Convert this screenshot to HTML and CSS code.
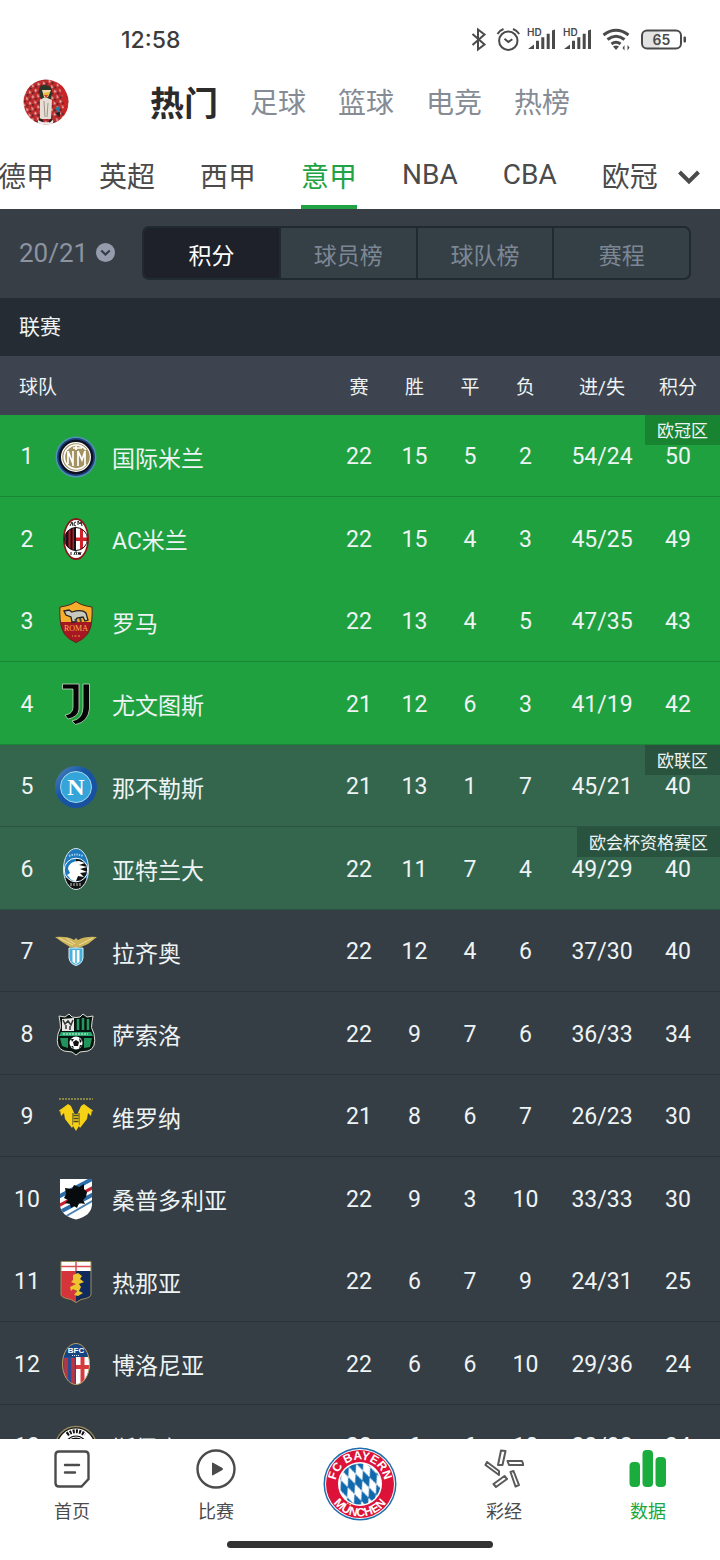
FILE: index.html
```html
<!DOCTYPE html>
<html lang="zh-CN">
<head>
<meta charset="utf-8">
<meta name="viewport" content="width=device-width, initial-scale=1">
<title>意甲积分榜</title>
<link rel="stylesheet" href="styles.css">
</head>
<body>
<div class="app">
  <header class="top">
    <div class="status">
      <time class="clock">12:58</time>
      <svg class="status-icons" viewBox="0 0 220 28" aria-hidden="true">
        <path class="st-line" d="M4.500 8L16.500 18.500L10 23.500V3.500L16.500 8.500L4.500 19"/>
        <circle class="st-line" cx="40.300" cy="14.800" r="9.200"/>
        <path class="st-line" d="M29.500 8Q31.500 4.500 35.500 3M45 3Q49 4.500 51.200 8M36.500 12.800L40.300 16L44.300 13.200"/>
        <g id="signal">
          <path class="st-fill" d="M60 23L66 18.500V23ZM68 14.700H71V23H68ZM73.300 11.300H76.300V23H73.300ZM78.700 7.700H81.700V23H78.700ZM84 4.500L87 3.500V23H84Z"/>
          <text class="st-hd" x="59" y="10">HD</text>
        </g>
        <use href="#signal" x="36"/>
        <path class="st-wifi" d="M135.500 9Q148 -.5 160.500 9M139.500 13.500Q148 7 156.500 13.500M143.500 18Q148 14.500 152.500 18"/>
        <path class="st-fill" d="M145 20.500Q148 18.500 151 20.500L148 24ZM156.500 19V24.500L154.500 22M159.500 24.500V19L161.500 21.500"/>
        <rect x="175" y="5" width="17" height="17" rx="3" fill="#e3e3e3"/>
        <rect class="st-line" x="174" y="4.500" width="39" height="18" rx="5"/>
        <rect class="st-fill" x="215.500" y="10.500" width="2.500" height="6" rx="1"/>
        <text class="st-bat" x="193.500" y="18.500" text-anchor="middle">65</text>
      </svg>
    </div>
    <div class="channels">
      <a class="avatar" href="#" aria-label="我的">
        <svg viewBox="0 0 46 46" aria-hidden="true">
          <defs>
            <clipPath id="avc"><circle cx="23" cy="23" r="22.500"/></clipPath>
            <pattern id="speck" width="9" height="7" patternUnits="userSpaceOnUse" patternTransform="rotate(24)">
              <rect width="9" height="7" fill="#bd2b2c"/>
              <path d="M1 1l3 1-1 2zM6 4l3 1-2 2z" fill="#efc9c0"/><path d="M5 0l2 2-2 1zM0 5l3 0-1 2zM7 1l2 2z" fill="#492226"/>
            </pattern>
          </defs>
          <g clip-path="url(#avc)">
            <rect width="46" height="46" fill="url(#speck)"/>
            <path d="M36 0Q50 20 42 46H39Q45 22 34 3Z" fill="#cb2427"/>
            <path d="M16 13Q15 6 22 6Q29 6 29 13L28 20H18Z" fill="#2b3528"/>
            <path d="M17 21L22 18L29 21L28 40H17Z" fill="#e6ded4"/>
            <path d="M19 11H28L25 18H21Z" fill="#f1d8ac"/><path d="M20 14L27 13L24 19Z" fill="#e8bd34"/><path d="M21 16l4 0-2 3Z" fill="#d94128"/>
            <path d="M21 22L22 38M25 24L24 38" stroke="#9b9588"/><path d="M15 41Q23 46 30 41V46H15Z" fill="#eee"/>
            <path d="M16 40L20 42M26 43L29 40" stroke="#222" stroke-width="2"/><path d="M32 29L37 27L36 35Z" fill="#257d9d"/><path d="M32 34L37 33L37 38Z" fill="#222"/>
          </g>
        </svg>
      </a>
      <nav class="channel-nav" aria-label="频道">
        <a class="current" href="#">热门</a><a href="#">足球</a><a href="#">篮球</a><a href="#">电竞</a><a href="#">热榜</a>
      </nav>
    </div>
    <div class="leagues">
      <nav class="league-nav" aria-label="赛事">
        <a href="#">德甲</a><a href="#">英超</a><a href="#">西甲</a><a class="current" href="#">意甲</a><a class="latin" href="#">NBA</a><a class="latin" href="#">CBA</a><a href="#">欧冠</a>
      </nav>
      <button class="more" aria-label="展开">
        <svg viewBox="0 0 24 16" aria-hidden="true"><path d="M2.500 3L12 12.500L21.500 3"/></svg>
      </button>
    </div>
  </header>

  <main class="content">
    <div class="toolbar">
      <label class="season">
        <select aria-label="赛季"><option>20/21</option></select>
        <svg viewBox="0 0 18 18" aria-hidden="true"><circle cx="9" cy="9" r="9" fill="#949cae"/><path d="M5 7.200L9 11L13 7.200" fill="none" stroke="#343c44" stroke-width="2"/></svg>
      </label>
      <div class="segments">
        <button class="selected">积分</button><button>球员榜</button><button>球队榜</button><button>赛程</button>
      </div>
    </div>
    <h2 class="section">联赛</h2>
    <table class="standings">
      <colgroup><col class="c-rank"><col class="c-crest"><col><col class="c-a"><col class="c-b"><col class="c-a"><col class="c-b"><col class="c-goals"><col class="c-pts"><col class="c-end"></colgroup>
      <thead>
        <tr><th class="team-head" colspan="3">球队</th><th>赛</th><th>胜</th><th>平</th><th>负</th><th>进/失</th><th>积分</th><th></th></tr>
      </thead>
      <tbody>
        <tr class="ucl"><td>1</td><td><svg class="crest" viewBox="0 0 44 44" aria-hidden="true">
          <circle cx="22" cy="22" r="20.500" fill="#4f93b6"/><circle cx="22" cy="22" r="19" fill="#1d3f78"/><circle cx="22" cy="22" r="17.300" fill="#0c1020"/><circle cx="22" cy="22" r="15" fill="#fff"/><circle cx="22" cy="22" r="13.800" fill="#a39261"/>
          <path d="M32 15A12 12 0 1 0 32 29M14 16V29M14 16L19 29M19 16V31M24 31V16L28 25L31 16V30M19 13H28M22 11V15" fill="none" stroke="#fff" stroke-width="1.700"/></svg></td>
          <th scope="row">国际米兰</th><td>22</td><td>15</td><td>5</td><td>2</td><td>54/24</td><td>50</td><td><span class="zone">欧冠区</span></td></tr>
        <tr class="ucl"><td>2</td><td><svg class="crest" viewBox="0 0 44 44" aria-hidden="true">
          <defs><clipPath id="milan"><circle cx="22" cy="22" r="11.500"/></clipPath></defs>
          <ellipse cx="22" cy="22" rx="13" ry="21" fill="#8b171c"/><ellipse cx="22" cy="22" rx="11.300" ry="19" fill="#fff"/>
          <g clip-path="url(#milan)"><path d="M10 10H22V34H10Z" fill="#c31825"/><path d="M12 10H14.500V34H12ZM16.500 10H18.500V34H16.500ZM20 10H22V34H20Z" fill="#171117"/><path d="M22 10H34V34H22Z" fill="#fff"/><path d="M26 10H29V34H26ZM22 20.500H34V24H22Z" fill="#d12229"/></g>
          <circle cx="22" cy="22" r="11.500" fill="none" stroke="#171117"/>
          <path d="M16 9l2-4 1 4M22 5q-2 0-2 2t2 2M24 8V4l2 3 1-2 1 4M17 35v3M20 38l1-3 2 0-1 3M24 38l1-3 1 3 1-3" fill="none" stroke="#181818"/></svg></td>
          <th scope="row">AC米兰</th><td>22</td><td>15</td><td>4</td><td>3</td><td>45/25</td><td>49</td><td></td></tr>
        <tr class="ucl"><td>3</td><td><svg class="crest" viewBox="0 0 44 44" aria-hidden="true">
          <path d="M22 1.500Q27 5.500 38 7Q38.500 12 37.800 20Q37 37 22 42.500Q7 37 6.200 20Q5.500 12 6 7Q17 5.500 22 1.500Z" fill="#f6ae2c"/>
          <path d="M6.200 22H37.800Q36 37 22 42.500Q8 37 6.200 22Z" fill="#a61723"/><path d="M22 1.500Q27 5.500 38 7Q38.500 12 37.800 20Q37 37 22 42.500Q7 37 6.200 20Q5.500 12 6 7Q17 5.500 22 1.500Z" fill="none" stroke="#54251b"/>
          <path d="M10 11L15 10L18 12Q28 9 32 13L34 20L31 21L29 17L23 18L21 22H18L17 17L12 15Z" fill="#c9c8bc" stroke="#222" stroke-width="1.300"/><path d="M21 19L23 22M26 18L27 22" stroke="#444" stroke-width="2"/>
          <text x="22" y="31" text-anchor="middle" class="crest-roma">ROMA</text><path d="M18 36h1M20.500 36h2M24 36h2" stroke="#eca33e"/></svg></td>
          <th scope="row">罗马</th><td>22</td><td>13</td><td>4</td><td>5</td><td>47/35</td><td>43</td><td></td></tr>
        <tr class="ucl"><td>4</td><td><svg class="crest" viewBox="0 0 44 44" aria-hidden="true">
          <path d="M8.500 2H25V27Q24.500 35 14 37L11 33Q19 32 19 25V7H8.500ZM29 2H35.500V27Q34 40 21.500 42.500L18 39Q29 37 29 25Z" fill="#050505" stroke="#c6d9c5" stroke-width=".8"/></svg></td>
          <th scope="row">尤文图斯</th><td>21</td><td>12</td><td>6</td><td>3</td><td>41/19</td><td>42</td><td></td></tr>
        <tr class="uel"><td>5</td><td><svg class="crest" viewBox="0 0 44 44" aria-hidden="true">
          <defs><linearGradient id="nap" x2="1" y2="1"><stop offset="0" stop-color="#5688bd"/><stop offset=".4" stop-color="#1556a5"/><stop offset="1" stop-color="#1a4e9c"/></linearGradient></defs>
          <circle cx="22" cy="22" r="21" fill="url(#nap)"/><circle cx="22" cy="22" r="15.500" fill="#35a5d9" stroke="#a8d8ee"/>
          <text x="22" y="30" text-anchor="middle" class="crest-n">N</text></svg></td>
          <th scope="row">那不勒斯</th><td>21</td><td>13</td><td>1</td><td>7</td><td>45/21</td><td>40</td><td><span class="zone">欧联区</span></td></tr>
        <tr class="uel"><td>6</td><td><svg class="crest" viewBox="0 0 44 44" aria-hidden="true">
          <defs><clipPath id="ata"><ellipse cx="22" cy="22" rx="12.500" ry="20.500"/></clipPath></defs>
          <g clip-path="url(#ata)"><rect width="44" height="44" fill="#1c79bd"/><path d="M0 31H44V44H0Z" fill="#111"/><circle cx="22" cy="23" r="11.800" fill="#1c79bd" stroke="#fff"/><path d="M22 12A11 11 0 0 1 22 34Z" fill="#111"/>
          <path d="M13 28L16 26L14 22Q15 14 25 14L31 16L25 18L33 20L26 22L33 25L26 26L30 30L24 29L22 34Q17 34 15 30Z" fill="#fff"/></g>
          <ellipse cx="22" cy="22" rx="12.500" ry="20.500" fill="none" stroke="#dce5e8"/><path d="M15 9q7-3 14 0" fill="none" stroke="#9bcae7" stroke-width="2" stroke-dasharray="1.500 1"/><path d="M17 36v3M20 36v3M23 36v3M26 36v3" stroke="#ccc"/></svg></td>
          <th scope="row">亚特兰大</th><td>22</td><td>11</td><td>7</td><td>4</td><td>49/29</td><td>40</td><td><span class="zone">欧会杯资格赛区</span></td></tr>
        <tr><td>7</td><td><svg class="crest" viewBox="0 0 44 44" aria-hidden="true">
          <path d="M1 7Q14 6 20 10L22 8L24 10Q31 6 43 7L34 14L27 17L22 18L16 17L8 12Z" fill="#cdb35a"/><path d="M5 8L19 15M12 8L21 14M39 8L25 15" stroke="#eee0a2" fill="none"/>
          <path d="M15 18H29V28Q28 34 22 35.500Q16 34 15 28Z" fill="#45b1dc" stroke="#def4fa"/><path d="M18.500 20H25.500V32L22 34L18.500 32Z" fill="#fff"/><path d="M21 20H23V33H21Z" fill="#6dc4e4"/></svg></td>
          <th scope="row">拉齐奥</th><td>22</td><td>12</td><td>4</td><td>6</td><td>37/30</td><td>40</td><td></td></tr>
        <tr><td>8</td><td><svg class="crest" viewBox="0 0 44 44" aria-hidden="true">
          <path d="M5 4L11 5L15 2L18 5Q22 6 26 5L29 2L33 5L39 4L38 10Q36 15 40 22Q43 36 34 39L26 40L22 43L18 40L10 39Q1 36 4 22Q8 15 6 10Z" fill="#08140f" stroke="#e0ded6"/>
          <path d="M8 7L20 6V19H8Z" fill="#e8e8e6"/><path d="M24 7V18M29 6V18M34 7V18" stroke="#249660" stroke-width="2.500"/><path d="M9 8l2 4 3-3 3 4 2-5M12 13v4M16 14v4" fill="none" stroke="#333" stroke-width="1.500"/>
          <path d="M7 20H37L39 24H5Z" fill="#27a56d"/><path d="M6 26H14V36L8 34ZM30 26H38L36 35L30 36Z" fill="#20945b"/>
          <path d="M9 22H34" stroke="#e9fff1" stroke-dasharray="2 1"/><circle cx="22" cy="31" r="6.500" fill="#fff"/><path d="M22 28L25 30L24 34H20L19 30ZM17 27L20 27L18 30ZM25 26L28 29L26 31ZM17 34L19 34L20 37ZM26 33L28 33L25 37Z" fill="#111"/></svg></td>
          <th scope="row">萨索洛</th><td>22</td><td>9</td><td>7</td><td>6</td><td>36/33</td><td>34</td><td></td></tr>
        <tr><td>9</td><td><svg class="crest" viewBox="0 0 44 44" aria-hidden="true">
          <path d="M5 4H39" stroke="#8b8448" stroke-width="2" stroke-dasharray="2 1"/><path d="M6 15L14 9L17 11L21 20V27L18 33L11 24L10 18L7 21ZM38 15L30 9L27 11L23 20V27L26 33L33 24L34 18L37 21Z" fill="#f7d116"/><path d="M5 16L9 14L8 18M39 16L35 14L36 18" fill="none" stroke="#f7d116"/>
          <path d="M19 18V30M25 18V30" stroke="#353d45"/><path d="M20 19H24L25 31L22 36L19 31Z" fill="#f7d116"/><path d="M19.500 20.500H24.500M19.500 23.500H24.500M19.500 26.500H24.500" stroke="#4b4928" stroke-width="1.400"/></svg></td>
          <th scope="row">维罗纳</th><td>21</td><td>8</td><td>6</td><td>7</td><td>26/23</td><td>30</td><td></td></tr>
        <tr><td>10</td><td><svg class="crest" viewBox="0 0 44 44" aria-hidden="true">
          <defs><clipPath id="samp"><path d="M6 2H38V28Q37 39 22 42.500Q7 39 6 28Z"/></clipPath></defs>
          <g clip-path="url(#samp)"><rect width="44" height="44" fill="#fff"/><path d="M4 20L40 1M4 36L40 17" stroke="#2b6da8" stroke-width="4"/><path d="M4 29L40 10" stroke="#c5222f" stroke-width="3"/><path d="M9 41L40 23" stroke="#4a82b4" stroke-width="2"/></g>
          <path d="M12 17L11 11L18 12L20 8L25 10L30 7L30 12L33 15L32 20L29 23L31 27L25 26L23 31L20 29L17 31L16 27L11 26L14 23L10 21Z" fill="#080b0e"/></svg></td>
          <th scope="row">桑普多利亚</th><td>22</td><td>9</td><td>3</td><td>10</td><td>33/33</td><td>30</td><td></td></tr>
        <tr><td>11</td><td><svg class="crest" viewBox="0 0 44 44" aria-hidden="true">
          <path d="M7 1.500H37V35Q36 38 27 39.500L22 42.500L17 39.500Q8 38 7 35Z" fill="#d5343b"/><path d="M22 11H37V35Q36 38 27 39.500L22 42Z" fill="#102a5c"/><path d="M7 2H37V11H7Z" fill="#fff"/><path d="M7 6.500H37M22 2V11" stroke="#d94c51" stroke-width="1.500"/>
          <path d="M19 15L24 13L28 16L26 19L30 22L25 24L27 27L25 31L29 33L24 36L20 35L23 31L19 29L17 31L16 27L22 24L17 22L19 20Z" fill="#eec52f"/><path d="M7 1.500H37V35Q36 38 27 39.500L22 42.500L17 39.500Q8 38 7 35Z" fill="none" stroke="#9c9052"/></svg></td>
          <th scope="row">热那亚</th><td>22</td><td>6</td><td>7</td><td>9</td><td>24/31</td><td>25</td><td></td></tr>
        <tr><td>12</td><td><svg class="crest" viewBox="0 0 44 44" aria-hidden="true">
          <defs><clipPath id="bol"><ellipse cx="22" cy="22" rx="13.500" ry="20.500"/></clipPath></defs>
          <g clip-path="url(#bol)"><rect width="44" height="44" fill="#2c4b91"/><path d="M12 16V44M19 16V44" stroke="#bd343e" stroke-width="3.500"/><path d="M22 15H44V44H22Z" fill="#fff"/><path d="M28.500 15V44M22 25H44" stroke="#d73a3e" stroke-width="4"/><rect width="44" height="15" fill="#164581"/></g>
          <text x="22" y="11" text-anchor="middle" class="crest-bfc">BFC</text><path d="M18 13.500h8" stroke="#dce8f0" stroke-dasharray="1 1"/><ellipse cx="22" cy="22" rx="13.500" ry="20.500" fill="none" stroke="#bba05e"/></svg></td>
          <th scope="row">博洛尼亚</th><td>22</td><td>6</td><td>6</td><td>10</td><td>29/36</td><td>24</td><td></td></tr>
        <tr><td>13</td><td><svg class="crest" viewBox="0 0 44 44" aria-hidden="true">
          <circle cx="22" cy="22" r="20.500" fill="#111" stroke="#95895f" stroke-width="1.500"/><circle cx="22" cy="22" r="15" fill="none" stroke="#fff" stroke-width="7"/><path d="M13 9.500Q22 3 31 9.500" fill="none" stroke="#111" stroke-width="4" stroke-dasharray="2 1.200"/><circle cx="22" cy="22" r="10" fill="#111" stroke="#fff"/></svg></td>
          <th scope="row">斯佩齐亚</th><td>22</td><td>6</td><td>6</td><td>10</td><td>28/38</td><td>24</td><td></td></tr>
      </tbody>
    </table>
  </main>

  <footer class="bottom">
    <nav class="tabbar" aria-label="主导航">
      <a href="#"><svg viewBox="0 0 40 40" aria-hidden="true"><path class="tab-line" d="M7 2.500H33Q36.500 2.500 36.500 6V30L29.500 37.500H7Q3.500 37.500 3.500 34V6Q3.500 2.500 7 2.500Z"/><path class="tab-line" stroke-linecap="round" d="M13 16H27M13 23.500H23"/></svg><span>首页</span></a>
      <a href="#"><svg viewBox="0 0 40 40" aria-hidden="true"><circle class="tab-line" cx="20" cy="20" r="18.500"/><path d="M16 14.500Q16 13 17.500 14L26.500 19Q27.500 20 26.500 21L17.500 26Q16 27 16 25.500Z" fill="#4b4b4b"/></svg><span>比赛</span></a>
      <a class="club" href="#" aria-label="球队主页"><svg viewBox="0 0 74 74" aria-hidden="true">
        <defs>
          <clipPath id="fcb"><circle cx="37" cy="37" r="20.500"/></clipPath>
          <pattern id="loz" width="8" height="18" patternUnits="userSpaceOnUse" patternTransform="translate(2 1) rotate(-24) skewX(-4)"><rect width="8" height="18" fill="#fff"/><path d="M4 0L8 9L4 18L0 9Z" fill="#1169ad"/></pattern>
          <path id="arc-top" d="M12.500 37A24.500 24.500 0 0 1 61.500 37"/><path id="arc-bottom" d="M4.500 37A32.500 32.500 0 0 0 69.500 37"/>
        </defs>
        <circle cx="37" cy="37" r="36.500" fill="#1d6cac"/><circle cx="37" cy="37" r="35" fill="#fff"/><circle cx="37" cy="37" r="34" fill="#dc1238"/><circle cx="37" cy="37" r="22" fill="#fff"/>
        <circle cx="37" cy="37" r="20.500" fill="url(#loz)"/>
        <text class="club-text"><textPath href="#arc-top" startOffset="50%" text-anchor="middle">FC BAYERN</textPath></text>
        <text class="club-text"><textPath href="#arc-bottom" startOffset="50%" text-anchor="middle">MÜNCHEN</textPath></text>
      </svg></a>
      <a href="#"><svg viewBox="0 0 40 40" aria-hidden="true"><path class="tab-thin" d="M17 1.500L21.500 2L18.500 16H14ZM23.500 12H38L39.500 16H25ZM3 13L15 22V26L1.500 16ZM26.500 23L29.500 22L35 36L31.500 37.500ZM20.500 27L23 30L12 38L9.500 35Z"/></svg><span>彩经</span></a>
      <a class="current" href="#"><svg viewBox="0 0 40 40" aria-hidden="true"><g fill="#1aad3e"><rect x="1.500" y="13" width="10.500" height="25" rx="4"/><rect x="14.500" y="1" width="10.500" height="37" rx="4"/><rect x="27.500" y="8" width="10.500" height="30" rx="4"/></g></svg><span>数据</span></a>
    </nav>
    <div class="home-bar"></div>
  </footer>
</div>
</body>
</html>
```

FILE: styles.css
```css
* { box-sizing: border-box; }

body {
  margin: 0;
  background: #fff;
  color: #4b4b4b;
  font-family: Roboto, "Noto Sans CJK SC", sans-serif;
}

a { color: inherit; text-decoration: none; }
button, select { font: inherit; color: inherit; border: 0; background: none; padding: 0; margin: 0; }
svg { display: block; }

.app { display: flex; flex-direction: column; height: 100vh; }
.top, .bottom { flex: none; }

/* Status bar */
.status {
  display: flex;
  justify-content: space-between;
  align-items: center;
  height: 80px;
  padding: 0 32px 0 121px;
}
.clock { font: 500 23px Inter, sans-serif; color: #3c3c3c; }
.status-icons { width: 220px; height: 28px; }
.st-line { fill: none; stroke: #4a4a4a; stroke-width: 2; }
.st-fill { fill: #4a4a4a; }
.st-wifi { fill: none; stroke: #4a4a4a; stroke-width: 3; }
.st-hd { font: 600 10px Inter, sans-serif; fill: #4a4a4a; }
.st-bat { font: 600 14px Inter, sans-serif; fill: #4a4a4a; }

/* Channels */
.channels { display: flex; align-items: center; height: 44px; }
.avatar { width: 46px; margin-left: 23px; margin-right: 81px; }
.channel-nav { display: flex; align-items: center; gap: 32px; padding-top: 3px; font-size: 28px; line-height: 40px; color: #858c95; }
.channel-nav .current { font-size: 34px; font-weight: 700; color: #2b2b2b; }

/* Leagues */
.leagues { display: flex; align-items: stretch; height: 85px; padding-top: 21px; }
.league-nav { flex: 1; display: flex; gap: 45px; margin-left: -2px; font-size: 28px; white-space: nowrap; }
.league-nav a { padding-top: 10px; border-bottom: 4px solid transparent; }
.league-nav .latin { padding-top: 13px; }
.league-nav .current { color: #21a345; border-color: #21a345; }
.more { width: 24px; margin-right: 19px; }
.more svg { width: 24px; height: 16px; fill: none; stroke: #4b4b4b; stroke-width: 4; }

/* Standings */
.content { flex: 1; min-height: 0; overflow: hidden; background: #353d45; color: #eef3f4; }
.toolbar { display: flex; align-items: center; height: 89px; padding: 0 29px 2px 19px; background: #373e45; }
.season { display: flex; align-items: center; gap: 7px; flex: none; width: 123px; color: #8b93a1; font-size: 26px; }
.season select { appearance: none; }
.season svg { width: 19px; height: 19px; }
.segments { flex: 1; display: flex; height: 54px; border: 2px solid #202a31; border-radius: 7px; overflow: hidden; background: #353f46; }
.segments button { flex: 1; font-size: 23px; color: #7d8794; padding-top: 3px; }
.segments button + button { border-left: 2px solid #202a31; }
.segments .selected { background: #1e2129; color: #fff; }
.section { margin: 0; padding-left: 19px; font-size: 21px; font-weight: 400; line-height: 58px; background: #262c33; }

.standings { width: 100%; table-layout: fixed; border-spacing: 0; font-size: 23px; }
.standings th, .standings td { padding: 0; font-weight: 400; text-align: center; }
.standings thead tr { height: 59px; background: #3d444f; font-size: 19px; }
.standings .team-head { padding-left: 19px; text-align: left; }
.c-rank { width: 54px; }
.c-crest { width: 44px; }
.c-a { width: 56px; }
.c-b { width: 55px; }
.c-goals { width: 98px; }
.c-pts { width: 54px; }
.c-end { width: 15px; }
.standings tbody tr { position: relative; height: 82px; }
.standings tbody tr:nth-child(even) { height: 83px; }
.standings tbody td, .standings tbody th { padding-top: 2px; border-bottom: 1px solid rgba(0, 0, 0, 0.16); }
.standings tbody tr:nth-child(8n+2) > * { border-bottom-color: transparent; }
.standings tbody th { padding-left: 14px; text-align: left; }
.crest { width: 44px; height: 44px; }
.ucl { background: #1ea13e; }
.uel { background: #34664e; }
.zone {
  position: absolute;
  top: 0;
  right: 0;
  padding: 2px 12px 0 12px;
  font-size: 17px;
  line-height: 28px;
  white-space: nowrap;
  background: rgba(0, 0, 0, 0.18);
}
.crest-roma { font: 8px "Liberation Serif", serif; fill: #f5b646; }
.crest-n { font: 700 24px "Liberation Serif", serif; fill: #fff; }
.crest-bfc { font: 700 8px "Liberation Sans", sans-serif; fill: #fff; }

/* Bottom bar */
.bottom { background: #fff; }
.tabbar { display: grid; grid-template-columns: repeat(5, 1fr); height: 100px; padding-top: 10px; font-size: 18px; }
.tabbar a { display: flex; flex-direction: column; align-items: center; gap: 8px; }
.tabbar svg { width: 40px; height: 40px; }
.tabbar .club { margin-top: -2px; }
.tabbar .club svg { width: 74px; height: 74px; }
.tabbar .current { color: #1aa83e; }
.tab-line { fill: none; stroke: #4b4b4b; stroke-width: 2.4; }
.tab-thin { fill: none; stroke: #5a5a5a; stroke-width: 2; stroke-linejoin: round; }
.club-text { font: 700 12px "Liberation Sans", sans-serif; fill: #fff; }
.home-bar { width: 37%; height: 7px; margin: 2px auto 12px; border-radius: 4px; background: #333; }
```
